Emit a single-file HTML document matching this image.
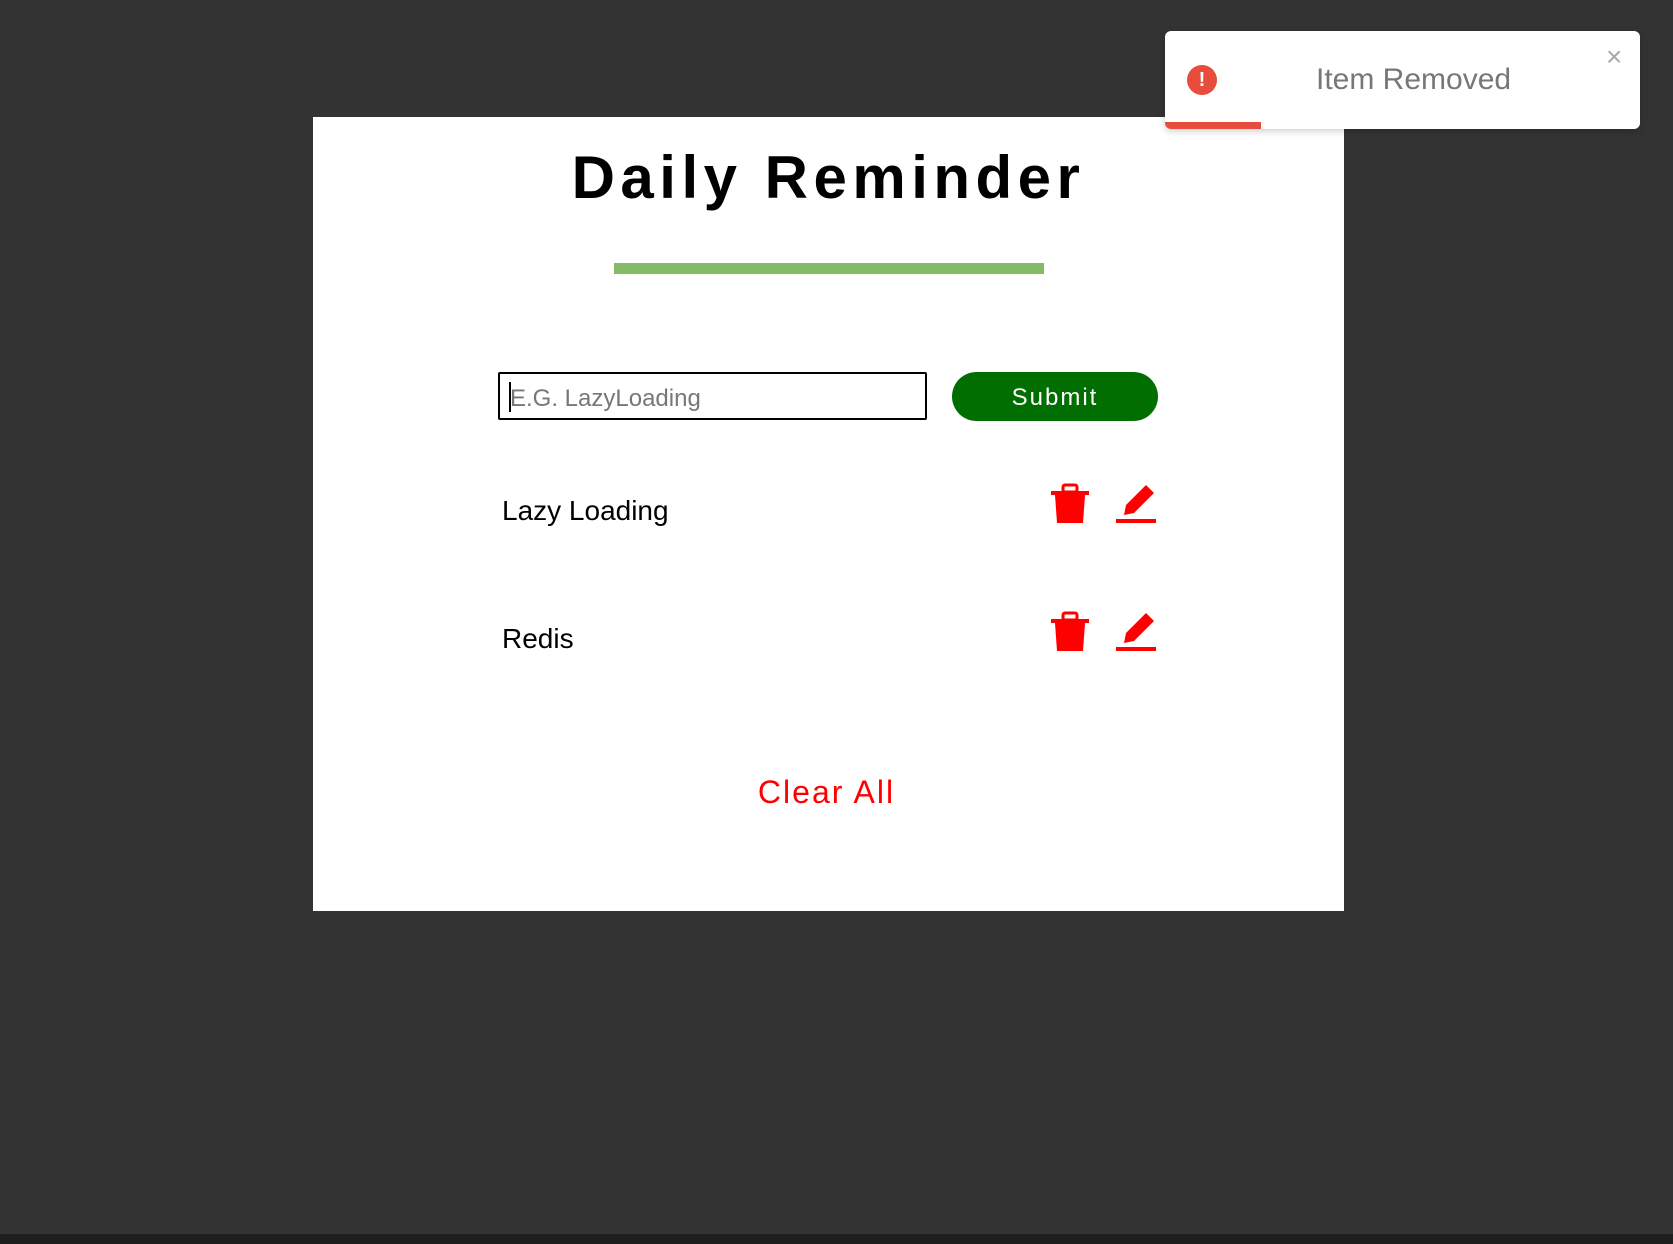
<!DOCTYPE html>
<html><head><style>
html,body{margin:0;padding:0;width:1673px;height:1244px;background:#333;overflow:hidden;position:relative;font-family:"Liberation Sans",sans-serif}
.card{position:absolute;left:313px;top:117px;width:1031px;height:794px;background:#fff}
.title{position:absolute;left:0;width:1657px;top:143px;text-align:center;font-weight:bold;font-size:60px;letter-spacing:5.5px;color:#000;line-height:70px}
.bar{position:absolute;left:614px;top:263px;width:430px;height:11px;background:#85bb65}
.input{position:absolute;left:498px;top:372px;width:425px;height:44px;border:2px solid #000;border-radius:2px;box-sizing:content-box}
.input span{position:absolute;left:10px;top:11px;font-size:24px;color:#777}
.input i{position:absolute;left:9px;top:8px;width:2px;height:30px;background:#000}
.btn{position:absolute;left:952px;top:372px;width:206px;height:49px;background:#006e00;border-radius:25px;color:#fff;font-size:24px;letter-spacing:2px;text-align:center;line-height:51px}
.item{position:absolute;left:502px;font-size:28px;color:#000}
.clear{position:absolute;left:0;width:1653px;top:774px;text-align:center;color:#f00;font-size:32px;letter-spacing:2px}
.toast{position:absolute;left:1165px;top:31px;width:475px;height:98px;background:#fff;border-radius:6px;overflow:hidden;box-shadow:0 2px 8px rgba(0,0,0,.2)}
.toast .ic{position:absolute;left:22px;top:34px;width:30px;height:30px;border-radius:50%;background:#e74c3c;color:#fff;font-weight:bold;text-align:center;line-height:30px;font-size:20px}
.toast .tx{position:absolute;left:151px;top:32px;font-size:30px;color:#777}
.toast .x{position:absolute;left:441px;top:10px;font-size:28px;color:#aaa}
.toast .pb{position:absolute;left:0;bottom:0;width:96px;height:7px;background:#e74c3c}
.bottom{position:absolute;left:0;top:1234px;width:1673px;height:10px;background:#1e1e1e}
</style></head><body>
<div class="card"></div>
<div class="title">Daily Reminder</div>
<div class="bar"></div>
<div class="input"><i></i><span>E.G. LazyLoading</span></div>
<div class="btn">Submit</div>
<div class="item" style="top:495px">Lazy Loading</div>
<div class="item" style="top:623px">Redis</div>
<svg style="position:absolute;left:1050px;top:483px" width="40" height="42" viewBox="0 0 40 42"><rect x="1" y="8" width="38" height="4" fill="#f00"/><rect x="13" y="2" width="14" height="7" rx="2" fill="none" stroke="#f00" stroke-width="3"/><path d="M5 12H35L33 40H7Z" fill="#f00"/></svg>
<svg style="position:absolute;left:1114px;top:483px" width="44" height="42" viewBox="0 0 44 42"><path d="M32 2L40 10L20 30L10 32L12 22Z" fill="#f00"/><rect x="2" y="36" width="40" height="4" fill="#f00"/></svg>
<svg style="position:absolute;left:1050px;top:611px" width="40" height="42" viewBox="0 0 40 42"><rect x="1" y="8" width="38" height="4" fill="#f00"/><rect x="13" y="2" width="14" height="7" rx="2" fill="none" stroke="#f00" stroke-width="3"/><path d="M5 12H35L33 40H7Z" fill="#f00"/></svg>
<svg style="position:absolute;left:1114px;top:611px" width="44" height="42" viewBox="0 0 44 42"><path d="M32 2L40 10L20 30L10 32L12 22Z" fill="#f00"/><rect x="2" y="36" width="40" height="4" fill="#f00"/></svg>
<div class="clear">Clear All</div>
<div class="toast"><div class="ic">!</div><div class="tx">Item Removed</div><div class="x">×</div><div class="pb"></div></div>
<div class="bottom"></div>
</body></html>
